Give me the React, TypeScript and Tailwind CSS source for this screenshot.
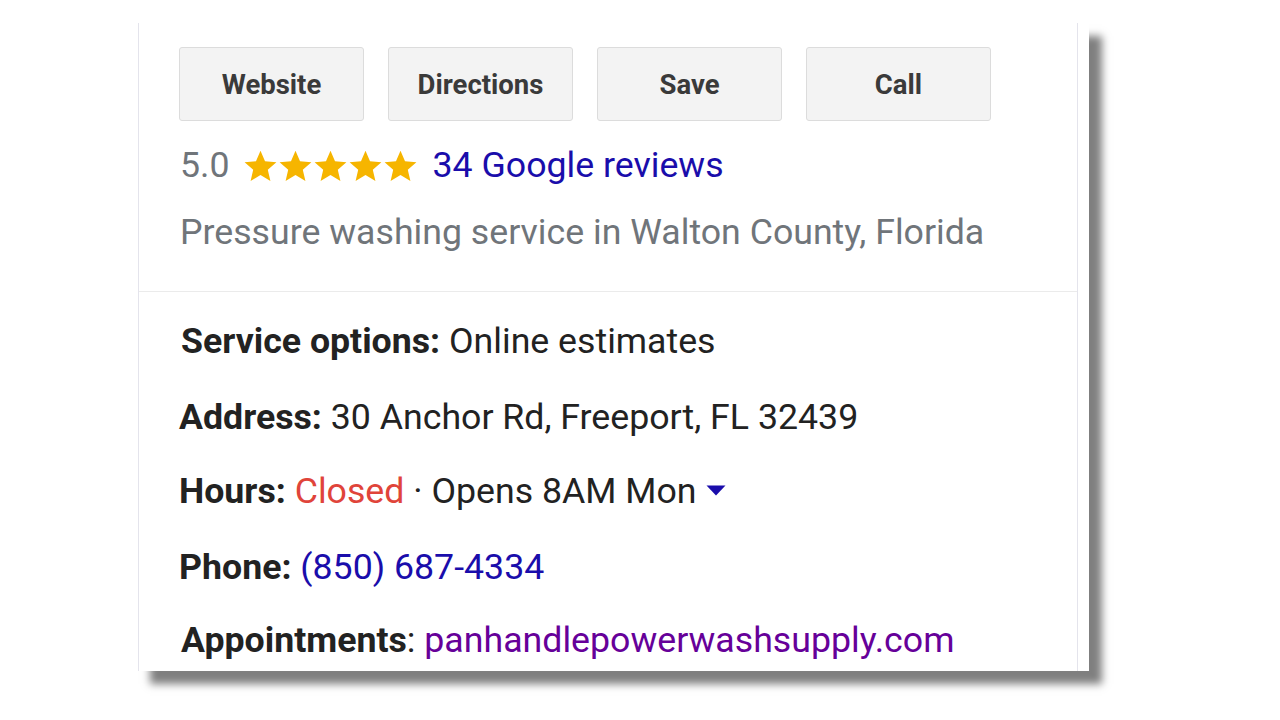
import React from "react";

const Star = () => (
  <svg width="35" height="35" viewBox="0 0 24 24" className="block">
    <path fill="#f6b500" d="M12 1.2l3.1 7.2 7.8.7-5.9 5.1 1.8 7.7L12 17.9l-6.8 4 1.8-7.7-5.9-5.1 7.8-.7z" />
  </svg>
);

export default function App() {
  const btn =
    "w-[185px] h-[74px] flex items-center justify-center pt-[2px] rounded-[3px] border border-[#dcdcdc] bg-[#f3f3f3] text-[27.5px] font-bold text-[#3a3a3a]";
  return (
    <div className="w-[1280px] h-[720px] bg-white overflow-hidden" style={{ fontFamily: "Roboto, 'Noto Sans', sans-serif" }}>
      <div className="ml-[137px] mt-[23px] w-[952px] h-[648px] bg-white shadow-[13px_13px_8px_rgba(0,0,0,0.5)]">
        <div className="ml-[1px] w-[940px] h-full border-l border-r border-[#e4e4ec] flex flex-col">
          <div className="pl-[40px] pt-[24px] flex gap-[24px]">
            <div className={btn}>Website</div>
            <div className={btn}>Directions</div>
            <div className={btn}>Save</div>
            <div className={btn}>Call</div>
          </div>
          <div className="pl-[41px] mt-[25px] flex items-center h-[40px] text-[35.7px] leading-none">
            <span className="text-[#70757a]">5.0</span>
            <span className="flex ml-[13px] gap-0">
              <Star />
              <Star />
              <Star />
              <Star />
              <Star />
            </span>
            <span className="ml-[15px] text-[#1a0dab]">34 Google reviews</span>
          </div>
          <div className="pl-[41px] mt-[27px] h-[40px] flex items-center text-[35.7px] text-[#70757a] leading-none">
            Pressure washing service in Walton County, Florida
          </div>
          <div className="mt-[38px] border-t border-[#ebebeb]" />
          <div className="pl-[42px] pt-[30px] flex flex-col text-[35.7px] leading-none text-[#222]">
            <div className="h-[40px] flex items-center">
              <span className="font-bold">Service options:</span>&nbsp;Online estimates
            </div>
            <div className="h-[40px] mt-[36px] flex items-center -ml-[2px]">
              <span className="font-bold">Address:</span>&nbsp;30 Anchor Rd, Freeport, FL 32439
            </div>
            <div className="h-[40px] mt-[34px] flex items-center -ml-[2px]">
              <span className="font-bold">Hours:</span>&nbsp;<span className="text-[#e0443a]">Closed</span>&nbsp;· Opens 8AM Mon
              <svg width="20" height="11" viewBox="0 0 20 11" className="ml-[10px] mt-[-4px]">
                <path d="M0.5 0.5h19L10 10.5z" fill="#1a0dab" />
              </svg>
            </div>
            <div className="h-[40px] mt-[36px] flex items-center -ml-[2px]">
              <span className="font-bold">Phone:</span>&nbsp;<span className="text-[#1a0dab]">(850) 687-4334</span>
            </div>
            <div className="h-[40px] mt-[33px] flex items-center">
              <span className="font-bold">Appointments</span>:&nbsp;<span className="text-[#660099]">panhandlepowerwashsupply.com</span>
            </div>
          </div>
        </div>
      </div>
    </div>
  );
}
